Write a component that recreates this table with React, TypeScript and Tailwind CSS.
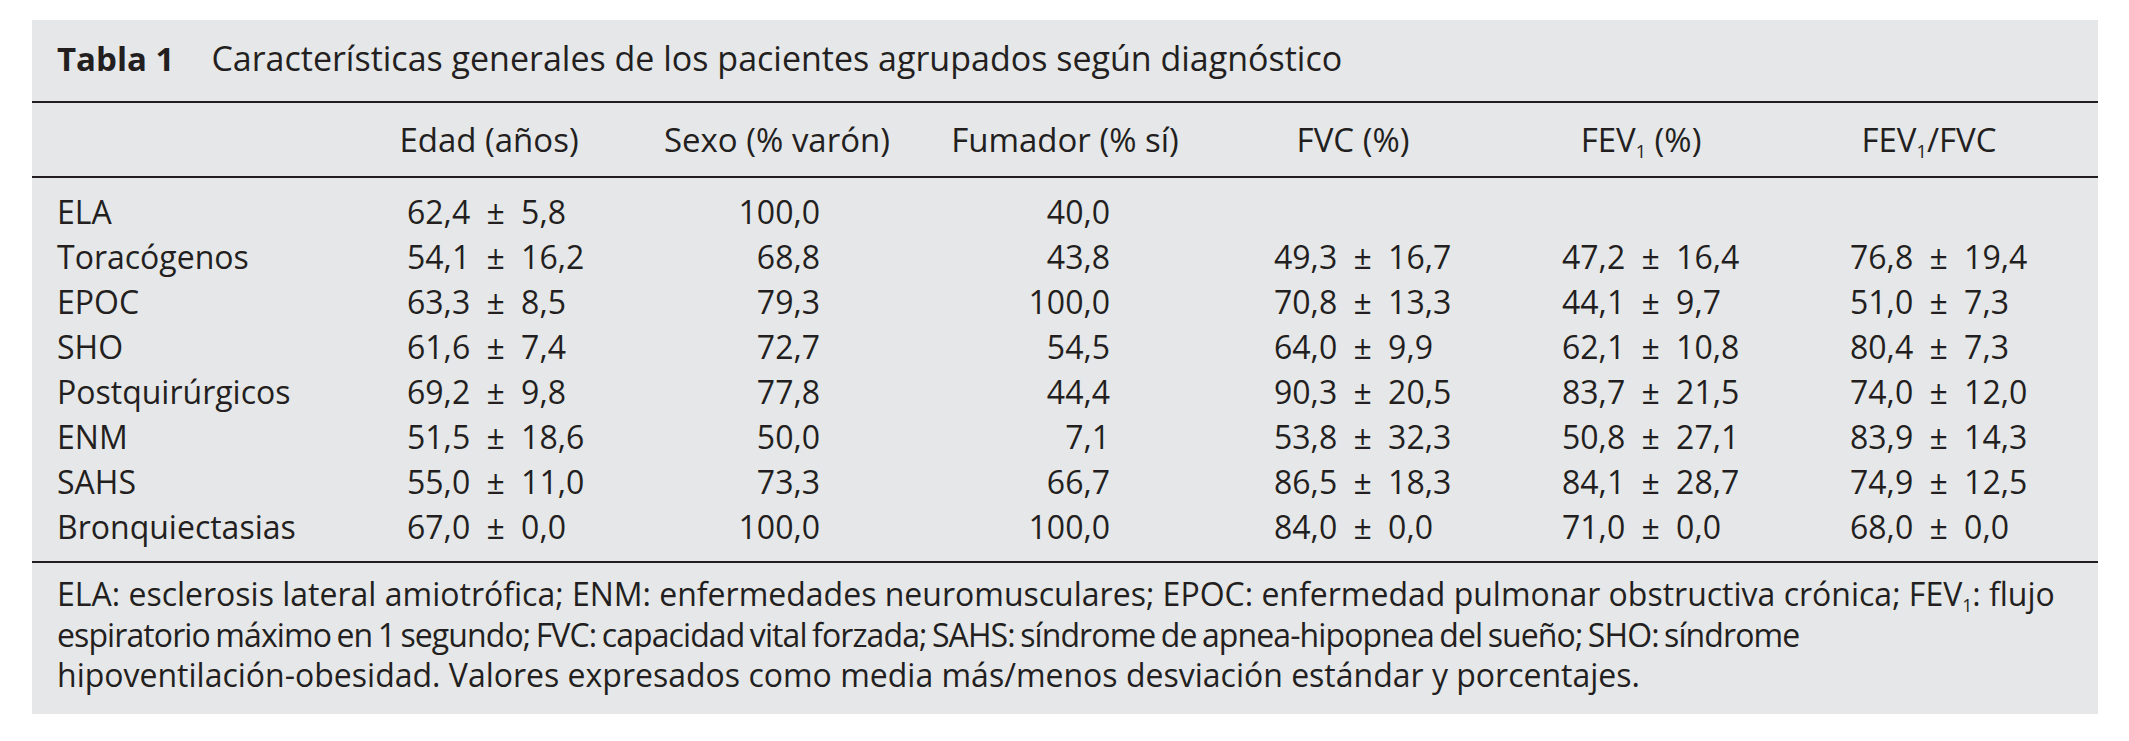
const rows: [string, string, string, string, string, string, string][] = [
  ['ELA', '62,4 ± 5,8', '100,0', '40,0', '', '', ''],
  ['Toracógenos', '54,1 ± 16,2', '68,8', '43,8', '49,3 ± 16,7', '47,2 ± 16,4', '76,8 ± 19,4'],
  ['EPOC', '63,3 ± 8,5', '79,3', '100,0', '70,8 ± 13,3', '44,1 ± 9,7', '51,0 ± 7,3'],
  ['SHO', '61,6 ± 7,4', '72,7', '54,5', '64,0 ± 9,9', '62,1 ± 10,8', '80,4 ± 7,3'],
  ['Postquirúrgicos', '69,2 ± 9,8', '77,8', '44,4', '90,3 ± 20,5', '83,7 ± 21,5', '74,0 ± 12,0'],
  ['ENM', '51,5 ± 18,6', '50,0', '7,1', '53,8 ± 32,3', '50,8 ± 27,1', '83,9 ± 14,3'],
  ['SAHS', '55,0 ± 11,0', '73,3', '66,7', '86,5 ± 18,3', '84,1 ± 28,7', '74,9 ± 12,5'],
  ['Bronquiectasias', '67,0 ± 0,0', '100,0', '100,0', '84,0 ± 0,0', '71,0 ± 0,0', '68,0 ± 0,0'],
];

function Sub1() {
  return <span className="relative top-[0.32em] text-[0.55em] leading-none">1</span>;
}

export default function App() {
  return (
    <div className="min-h-screen bg-white pt-[20px] pl-[32px] font-['Open_Sans',sans-serif] text-[#231f20]">
      <div className="w-[2066px] bg-[#e6e7e9]">
        {/* Caption */}
        <div className="flex items-baseline pl-[25px] pt-[16px] pb-[20px]">
          <span className="text-[33px] leading-[45px] font-bold">Tabla 1</span>
          <span className="ml-[37px] text-[34px] leading-[45px]">
            Características generales de los pacientes agrupados según diagnóstico
          </span>
        </div>

        <div className="h-[2px] bg-[#231f20]" />

        {/* Header */}
        <div className="grid grid-cols-[313px_repeat(6,288px)] pt-[14px] pb-[14px] text-[33px] leading-[45px]">
          <div />
          <div className="text-center">Edad (años)</div>
          <div className="text-center">Sexo (% varón)</div>
          <div className="text-center">Fumador (% sí)</div>
          <div className="text-center">FVC (%)</div>
          <div className="text-center">
            FEV<Sub1 /> (%)
          </div>
          <div className="text-center">
            FEV<Sub1 />/FVC
          </div>
        </div>

        <div className="h-[2px] bg-[#231f20]" />

        {/* Body */}
        <div className="pt-[11px] pb-[12px] text-[32px] leading-[45px]">
          {rows.map((r) => (
            <div key={r[0]} className="grid grid-cols-[375px_213px_200px_290px_452px_288px_1fr] [word-spacing:8px]">
              <div className="pl-[25px] [word-spacing:0px]">{r[0]}</div>
              <div>{r[1]}</div>
              <div className="text-right">{r[2]}</div>
              <div className="text-right">{r[3]}</div>
              <div className="pl-[164px]">{r[4]}</div>
              <div>{r[5]}</div>
              <div>{r[6]}</div>
            </div>
          ))}
        </div>

        <div className="h-[2px] bg-[#231f20]" />

        {/* Footnote */}
        <div className="pl-[25px] pt-[11px] pb-[18px] text-[32px] leading-[40.7px] whitespace-nowrap">
          <div>
            ELA: esclerosis lateral amiotrófica; ENM: enfermedades neuromusculares; EPOC: enfermedad pulmonar obstructiva crónica; FEV<Sub1 />: flujo
          </div>
          <div className="tracking-[-0.9px] [word-spacing:-2px]">
            espiratorio máximo en 1 segundo; FVC: capacidad vital forzada; SAHS: síndrome de apnea-hipopnea del sueño; SHO: síndrome
          </div>
          <div>hipoventilación-obesidad. Valores expresados como media más/menos desviación estándar y porcentajes.</div>
        </div>
      </div>
    </div>
  );
}
